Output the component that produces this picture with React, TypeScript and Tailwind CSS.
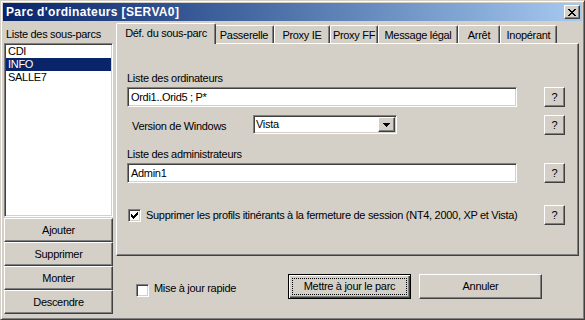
import React from "react";

// classic win2k bevels
const raised =
  "border border-t-white border-l-white border-r-[#404040] border-b-[#404040] shadow-[inset_-1px_-1px_#808080] bg-[#d4d0c8]";
const sunken =
  "border border-t-[#808080] border-l-[#808080] border-r-white border-b-white shadow-[inset_1px_1px_#404040,inset_-1px_-1px_#d4d0c8] bg-white";

const tabs = [
  { label: "Déf. du sous-parc", cls: "w-[100px] h-[21px] -mr-[2px] -mb-[1px] z-10", active: true },
  { label: "Passerelle", cls: "w-[60px] h-[18px]" },
  { label: "Proxy IE", cls: "w-[56px] h-[18px]" },
  { label: "Proxy FF", cls: "w-[48px] h-[18px]" },
  { label: "Message légal", cls: "w-[80px] h-[18px]" },
  { label: "Arrêt", cls: "w-[42px] h-[18px]" },
  { label: "Inopérant", cls: "w-[57px] h-[18px]" },
];

const subParcs = ["CDI", "INFO", "SALLE7"];
const actions = ["Ajouter", "Supprimer", "Monter", "Descendre"];

// pixel check mark, top row of each 3px column
const checkCols = [2, 3, 4, 3, 2, 1, 0];

function CheckBox({ checked }: { checked?: boolean }) {
  return (
    <span className={`w-[13px] h-[13px] shrink-0 flex items-center justify-center ${sunken}`}>
      {checked && (
        <svg width="7" height="7" viewBox="0 0 7 7" shapeRendering="crispEdges">
          {checkCols.map((y, x) => (
            <rect key={x} x={x} y={y} width="1" height="3" fill="#000" />
          ))}
        </svg>
      )}
    </span>
  );
}

function HelpButton() {
  return (
    <div className={`ml-auto w-[21px] h-[20px] shrink-0 flex items-center justify-center ${raised}`}>
      ?
    </div>
  );
}

function CloseGlyph() {
  const rows: [number, number][][] = [
    [[0, 2], [6, 2]],
    [[1, 2], [5, 2]],
    [[2, 4]],
    [[3, 2]],
    [[2, 4]],
    [[1, 2], [5, 2]],
    [[0, 2], [6, 2]],
  ];
  return (
    <svg width="8" height="7" viewBox="0 0 8 7" shapeRendering="crispEdges">
      {rows.map((segs, y) =>
        segs.map(([x, w], i) => <rect key={`${y}-${i}`} x={x} y={y} width={w} height="1" fill="#000" />)
      )}
    </svg>
  );
}

function DropArrow() {
  return (
    <svg width="7" height="4" viewBox="0 0 7 4" shapeRendering="crispEdges">
      <rect x="0" y="0" width="7" height="1" fill="#000" />
      <rect x="1" y="1" width="5" height="1" fill="#000" />
      <rect x="2" y="2" width="3" height="1" fill="#000" />
      <rect x="3" y="3" width="1" height="1" fill="#000" />
    </svg>
  );
}

export default function App() {
  return (
    <div className="w-[585px] h-[320px] flex flex-col p-[2px] bg-[#d4d0c8] border border-t-[#d4d0c8] border-l-[#d4d0c8] border-r-[#404040] border-b-[#404040] shadow-[inset_1px_1px_#fff,inset_-1px_-1px_#808080] font-['Liberation_Sans',Arial,sans-serif] text-[11px] leading-[13px] tracking-[-0.3px] text-black select-none">
      {/* title bar */}
      <div className="h-[18px] shrink-0 flex items-center pl-[3px] pr-[2px] bg-linear-to-r from-[#0a246a] to-[#a6caf0]">
        <span className="pt-[1px] text-white font-bold text-[12px] tracking-[0.35px]">Parc d'ordinateurs [SERVA0]</span>
        <div className={`ml-auto w-[16px] h-[14px] flex items-center justify-center ${raised}`}>
          <CloseGlyph />
        </div>
      </div>

      <div className="flex flex-1">
        {/* left column */}
        <div className="ml-[1px] w-[109px] flex flex-col">
          <div className="h-[22px] pt-[7px] pl-[2px]">Liste des sous-parcs</div>
          <div className={`h-[174px] p-[1px] ${sunken}`}>
            {subParcs.map((s) => (
              <div
                key={s}
                className={`h-[13px] pl-[2px] ${s === "INFO" ? "bg-[#0a246a] text-white" : ""}`}
              >
                {s}
              </div>
            ))}
          </div>
          <div className="mt-[1px] flex flex-col">
            {actions.map((a) => (
              <div key={a} className={`h-[24px] flex items-center justify-center ${raised}`}>
                {a}
              </div>
            ))}
          </div>
        </div>

        {/* right side */}
        <div className="ml-[3px] w-[463px] flex flex-col">
          <div className="h-[22px] flex items-end relative z-10">
            {tabs.map((t) => (
              <div
                key={t.label}
                className={`${t.cls} relative shrink-0 pt-[3px] text-center whitespace-nowrap rounded-t-[2px] bg-[#d4d0c8] border-l border-t border-r border-l-white border-t-white border-r-[#404040] shadow-[inset_-1px_0_#808080]`}
              >
                {t.label}
              </div>
            ))}
          </div>

          <div className="h-[213px] flex flex-col pt-[28px] pl-[10px] pr-[13px] border border-t-white border-l-white border-r-[#404040] border-b-[#404040] shadow-[inset_-1px_-1px_#808080]">
            <div className="mb-[2px]">Liste des ordinateurs</div>
            <div className="flex items-center">
              <div className={`w-[390px] h-[20px] flex items-center pl-[3px] ${sunken}`}>Ordi1..Orid5 ; P*</div>
              <HelpButton />
            </div>

            <div className="mt-[8px] flex items-start">
              <div className="w-[126px] pl-[5px] pt-[5px]">Version de Windows</div>
              <div className={`w-[144px] h-[19px] p-[1px] flex items-center ${sunken}`}>
                <span className="pl-[1px]">Vista</span>
                <div className={`ml-auto w-[17px] h-full flex items-center justify-center ${raised}`}>
                  <DropArrow />
                </div>
              </div>
              <HelpButton />
            </div>

            <div className="mt-[13px] mb-[2px]">Liste des administrateurs</div>
            <div className="flex items-center">
              <div className={`w-[390px] h-[20px] flex items-center pl-[3px] ${sunken}`}>Admin1</div>
              <HelpButton />
            </div>

            <div className="mt-[22px] flex items-center">
              <span className="ml-[1px]">
                <CheckBox checked />
              </span>
              <span className="ml-[5px] whitespace-nowrap">
                Supprimer les profils itinérants à la fermeture de session (NT4, 2000, XP et Vista)
              </span>
              <HelpButton />
            </div>
          </div>

          {/* bottom row */}
          <div className="mt-[18px] h-[25px] flex items-start">
            <div className="w-[172px] pl-[20px] pt-[8px] flex items-center">
              <CheckBox />
              <span className="ml-[5px] mb-[3px]">Mise à jour rapide</span>
            </div>
            <div className="w-[123px] h-[25px] flex border border-black bg-[#d4d0c8] shadow-[inset_1px_1px_#fff,inset_-1px_-1px_#404040,inset_-2px_-2px_#808080]">
              <div className="flex-1 m-[3px] border border-dotted border-black flex items-center justify-center">
                Mettre à jour le parc
              </div>
            </div>
            <div className={`ml-[8px] w-[123px] h-[25px] flex items-center justify-center ${raised}`}>
              Annuler
            </div>
          </div>
        </div>
      </div>
    </div>
  );
}
